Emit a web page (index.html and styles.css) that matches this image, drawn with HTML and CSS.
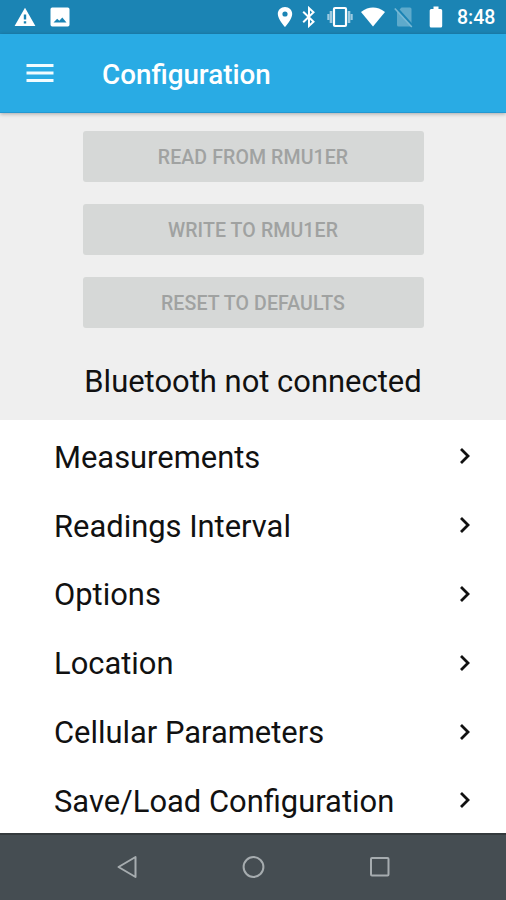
FILE: index.html
```html
<!DOCTYPE html>
<html lang="en">
<head>
<meta charset="utf-8">
<title>Configuration</title>
<link rel="stylesheet" href="styles.css">
</head>
<body>
<div class="screen">
  <div class="status">
    <div class="notices">
      <svg width="22" height="20" viewBox="0 0 22 20"><path fill="#fff" fill-rule="evenodd" d="M11 .8 21.400 19H.6zM9.800 7.500v5h2.400v-5zm0 6.700v2.400h2.400v-2.400z"/></svg>
      <svg width="20" height="20" viewBox="0 0 20 20"><path fill="#fff" fill-rule="evenodd" d="M2.200.5h15.600q1.700 0 1.700 1.700v15.600q0 1.700-1.700 1.700H2.200Q.5 19.500.5 17.800V2.200Q.5.5 2.200.5zM3.500 15.600h13l-4.200-5.200-3 3.400-2.100-2z"/></svg>
    </div>
    <div class="signals">
      <svg class="pin" width="16" height="22" viewBox="0 0 16 22"><path fill="#fff" fill-rule="evenodd" d="M8 1C3.900 1 .8 4.100.8 8c0 5.300 7.200 13 7.200 13s7.200-7.700 7.200-13C15.200 4.100 12.100 1 8 1zM8 5.400a2.600 2.600 0 1 1 0 5.200 2.600 2.600 0 0 1 0-5.200z"/></svg>
      <svg class="bt" width="14" height="22" viewBox="0 0 14 22"><path fill="none" stroke="#fff" stroke-width="2" d="M1.200 5.800 11.500 15.700l-4.500 4.200V2.100l4.500 4.200L1.200 16.200"/></svg>
      <svg class="vibrate" width="26" height="22" viewBox="0 0 26 22"><rect x="7" y="2" width="12" height="18" rx="1" fill="none" stroke="#fff" stroke-width="2.200"/><path d="M4 5v12M22 5v12" stroke="#9dcbe1" stroke-width="2.600"/><path d="M1.400 8v6M24.600 8v6" stroke="#9dcbe1" stroke-width="2.200"/></svg>
      <svg class="wifi" width="26" height="22" viewBox="0 0 26 22"><path fill="#fff" d="M1 6Q13-2.800 25 6L13 20.500z"/></svg>
      <svg class="sim" width="20" height="22" viewBox="0 0 20 22"><path fill="#5eaacb" d="M7.500 1.500H16q1.500 0 1.500 1.500v16q0 1.500-1.500 1.500H4.500Q3 20.500 3 19V6z"/><path d="m1.800 1.200 17 19" stroke="#1b84b4" stroke-width="2.500"/><path d="m.8 2.500 17 18.500" stroke="#79b9d5" stroke-width="1.600"/></svg>
      <svg class="battery" width="14" height="22" viewBox="0 0 14 22"><path fill="#fff" d="M4.500.5h5V3h2.200q1.500 0 1.500 1.500V20q0 1.500-1.500 1.500H2.200Q.7 21.500.7 20V4.500Q.7 3 2.200 3h2.300z"/></svg>
      <span class="time">8:48</span>
    </div>
  </div>
  <header class="appbar">
    <svg width="28" height="20" viewBox="0 0 28 20"><path d="M.5 2.500h27M.5 10h27M.5 17.500h27" stroke="#f2fcff" stroke-width="3"/></svg>
    <h1>Configuration</h1>
  </header>
  <section class="actions">
    <button disabled>READ FROM RMU1ER</button>
    <button disabled>WRITE TO RMU1ER</button>
    <button disabled>RESET TO DEFAULTS</button>
    <p>Bluetooth not connected</p>
  </section>
  <ul class="menu">
    <li>Measurements<svg width="12" height="18" viewBox="0 0 12 18"><path d="m2 2 7 7-7 7"/></svg></li>
    <li>Readings Interval<svg width="12" height="18" viewBox="0 0 12 18"><path d="m2 2 7 7-7 7"/></svg></li>
    <li>Options<svg width="12" height="18" viewBox="0 0 12 18"><path d="m2 2 7 7-7 7"/></svg></li>
    <li>Location<svg width="12" height="18" viewBox="0 0 12 18"><path d="m2 2 7 7-7 7"/></svg></li>
    <li>Cellular Parameters<svg width="12" height="18" viewBox="0 0 12 18"><path d="m2 2 7 7-7 7"/></svg></li>
    <li>Save/Load Configuration<svg width="12" height="18" viewBox="0 0 12 18"><path d="m2 2 7 7-7 7"/></svg></li>
  </ul>
  <nav class="navbar">
    <svg width="24" height="24" viewBox="0 0 24 24"><path d="M20.500 2v20L3.500 12z"/></svg>
    <svg width="24" height="24" viewBox="0 0 24 24"><circle cx="12.500" cy="12" r="9.900"/></svg>
    <svg width="24" height="24" viewBox="0 0 24 24"><rect x="4" y="3" width="17.500" height="17.500" rx="1"/></svg>
  </nav>
</div>
</body>
</html>
```
FILE: styles.css
```css
* { box-sizing: border-box; }
body { margin: 0; font-family: Roboto, "Liberation Sans", sans-serif; color: #111; }
svg { display: block; flex: none; }
.screen { width: 506px; height: 900px; display: flex; flex-direction: column; background: #fff; overflow: hidden; }
.status { height: 34px; flex: none; display: flex; justify-content: space-between; background: #1b84b4; padding: 0 10px 0 14px; }
.notices { display: flex; gap: 14px; padding-top: 7px; }
.signals { display: flex; align-items: center; }
.bt { margin-left: 9px; }
.vibrate { margin-left: 11px; }
.wifi { margin-left: 7px; }
.sim { margin-left: 8px; }
.battery { margin-left: 15px; }
.time { margin-left: 14px; width: 39px; font-size: 19.500px; font-weight: 500; line-height: 34px; color: #fff; white-space: nowrap; padding-top: 2px; }
.appbar { height: 79px; flex: none; display: flex; align-items: center; gap: 48px; padding-left: 26px; background: #29abe4; border-bottom: 1px solid #2398d2; box-shadow: 0 1px 4px rgba(0, 0, 0, .3); z-index: 1; }
h1 { margin: 4px 0 0; font-size: 27.800px; font-weight: 500; line-height: 36px; color: #fff; }
.actions { height: 307px; flex: none; background: #efefef; padding-top: 18px; display: flex; flex-direction: column; align-items: center; }
button { width: 341px; height: 51px; margin: 0 0 22px; padding: 2px 0 0; border: 0; border-radius: 3px; background: #d6d8d7; color: #a0a2a1; font: 500 19.500px Roboto, "Liberation Sans", sans-serif; letter-spacing: .12px; }
.actions p { margin: 12px 0 0; font-size: 30.950px; line-height: 40px; white-space: nowrap; }
.menu { margin: 0; padding: 3px 0 0; list-style: none; height: 413px; flex: none; }
.menu li { height: 68.800px; display: flex; align-items: center; justify-content: space-between; padding: 0 35px 0 54px; font-size: 30.900px; white-space: nowrap; }
.menu path { fill: none; stroke: #111; stroke-width: 2.800; }
.menu svg { margin-bottom: 2px; }
.navbar { height: 67px; flex: none; display: flex; justify-content: center; gap: 102px; padding-top: 20px; background: #454d52; border-top: 2px solid #343a3d; }
.navbar svg { fill: none; stroke: #a6acaf; stroke-width: 2; stroke-linejoin: round; }
```
